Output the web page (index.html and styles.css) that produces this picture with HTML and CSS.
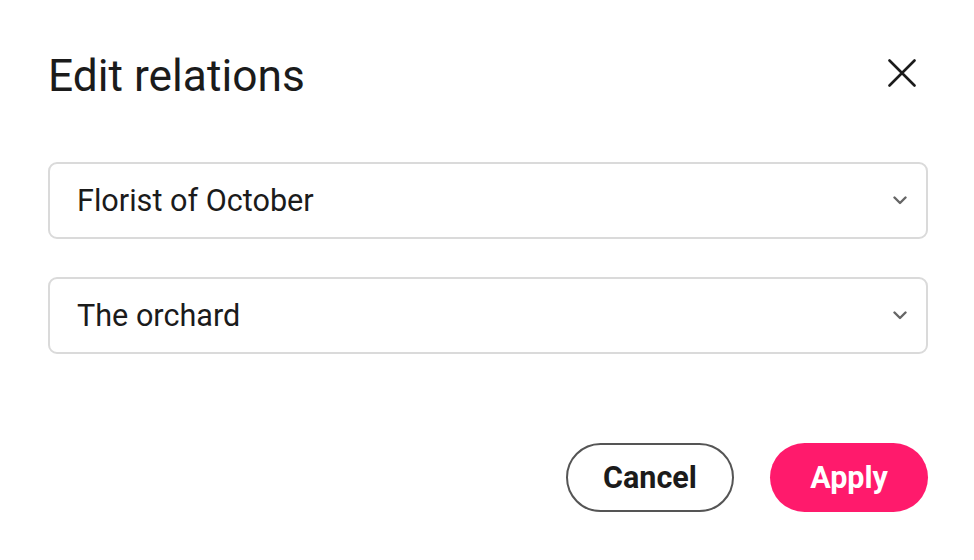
FILE: index.html
```html
<!DOCTYPE html>
<html lang="en">
<head>
<meta charset="utf-8">
<title>Edit relations</title>
<link rel="stylesheet" href="styles.css">
</head>
<body>
<div class="dialog">
  <div class="header">
    <h1 class="title">Edit relations</h1>
    <button class="close" aria-label="Close">
      <svg width="28" height="28" viewBox="0 0 28 28"><path d="M1.5 1.5 L26.5 26.5 M26.5 1.5 L1.5 26.5" stroke="#1b1b1b" stroke-width="2.6" stroke-linecap="round" fill="none"/></svg>
    </button>
  </div>
  <div class="fields">
    <div class="select">
      <span class="select-value">Florist of October</span>
      <svg class="chevron" width="14" height="9" viewBox="0 0 14 9"><path d="M1.5 1.5 L7 7 L12.5 1.5" stroke="#666" stroke-width="2.4" stroke-linecap="round" stroke-linejoin="round" fill="none"/></svg>
    </div>
    <div class="select">
      <span class="select-value">The orchard</span>
      <svg class="chevron" width="14" height="9" viewBox="0 0 14 9"><path d="M1.5 1.5 L7 7 L12.5 1.5" stroke="#666" stroke-width="2.4" stroke-linecap="round" stroke-linejoin="round" fill="none"/></svg>
    </div>
  </div>
  <div class="actions">
    <button class="btn btn-cancel">Cancel</button>
    <button class="btn btn-apply">Apply</button>
  </div>
</div>
</body>
</html>
```
FILE: styles.css
```css
html, body {
  margin: 0;
  padding: 0;
  background: #ffffff;
}
body {
  font-family: Roboto, "Liberation Sans", Arial, sans-serif;
  color: #1b1b1b;
}
.dialog {
  width: 880px;
  padding: 50px 46px 0 48px;
  display: flex;
  flex-direction: column;
}
.header {
  display: flex;
  justify-content: space-between;
  align-items: flex-start;
  height: 52px;
}
.title {
  margin: 0;
  font-size: 44.3px;
  font-weight: 400;
  line-height: 52px;
}
.close {
  width: 40px;
  height: 40px;
  margin-top: 3px;
  margin-right: 6px;
  padding: 0;
  border: none;
  background: transparent;
  display: flex;
  align-items: center;
  justify-content: center;
}
.fields {
  margin-top: 60px;
  display: flex;
  flex-direction: column;
  gap: 38px;
}
.select {
  box-sizing: border-box;
  height: 77px;
  border: 2px solid #dadada;
  border-radius: 9px;
  display: flex;
  align-items: center;
  justify-content: space-between;
  padding: 0 19px 0 27px;
}
.select-value {
  font-size: 30.6px;
  line-height: 36px;
  color: #1b1b1b;
}
.chevron {
  display: block;
}
.actions {
  margin-top: 89px;
  display: flex;
  justify-content: flex-end;
  gap: 36px;
}
.btn {
  box-sizing: border-box;
  height: 69px;
  border-radius: 35px;
  font-family: Roboto, "Liberation Sans", Arial, sans-serif;
  font-size: 30.5px;
  font-weight: 700;
  display: flex;
  align-items: center;
  justify-content: center;
}
.btn-cancel {
  width: 168px;
  border: 2px solid #555555;
  background: #ffffff;
  color: #1b1b1b;
}
.btn-apply {
  width: 158px;
  border: none;
  background: #ff1a6c;
  color: #ffffff;
}
```
